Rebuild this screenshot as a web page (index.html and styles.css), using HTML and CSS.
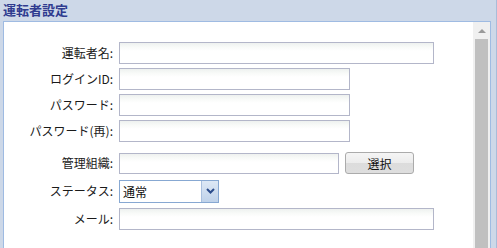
FILE: index.html
```html
<!DOCTYPE html>
<html lang="ja">
<head>
<meta charset="utf-8">
<title>運転者設定</title>
<link rel="stylesheet" href="styles.css">
</head>
<body>
<div class="window">
  <div class="title">運転者設定</div>
  <div class="panel">
    <form class="form">
      <div class="row r1">
        <label class="lbl">運転者名:</label>
        <input class="inp w-long" type="text">
      </div>
      <div class="row">
        <label class="lbl">ログインID:</label>
        <input class="inp w-mid" type="text">
      </div>
      <div class="row">
        <label class="lbl">パスワード:</label>
        <input class="inp w-mid" type="password">
      </div>
      <div class="row">
        <label class="lbl">パスワード(再):</label>
        <input class="inp w-mid" type="password">
      </div>
      <div class="row r5">
        <label class="lbl">管理組織:</label>
        <input class="inp w-org" type="text">
        <button class="btn" type="button">選択</button>
      </div>
      <div class="row r6">
        <label class="lbl">ステータス:</label>
        <div class="select">
          <span class="sel-text">通常</span>
          <span class="sel-btn">
            <svg width="9" height="6" viewBox="0 0 9 6"><path d="M1 1 L4.5 4.5 L8 1" fill="none" stroke="#2b4c8c" stroke-width="2"/></svg>
          </span>
        </div>
      </div>
      <div class="row r7">
        <label class="lbl">メール:</label>
        <input class="inp w-long" type="text">
      </div>
    </form>
    <div class="scrollbar">
      <div class="arrow"></div>
      <div class="thumb"></div>
    </div>
  </div>
</div>
</body>
</html>
```
FILE: styles.css
```css
html, body {
  margin: 0;
  padding: 0;
  height: 100%;
  overflow: hidden;
}
body {
  background: #cdd8e8;
  font-family: "Noto Sans CJK JP", "Liberation Sans", sans-serif;
  font-size: 12px;
  color: #111;
}
.window {
  height: 248px;
  border-right: 1px solid #a9bcd8;
  box-sizing: border-box;
  width: 497px;
  display: flex;
  flex-direction: column;
}
.title {
  height: 21px;
  padding-left: 3px;
  font-size: 13px;
  font-weight: bold;
  color: #2f3b8f;
  line-height: 19px;
}
.panel {
  flex: 1;
  margin-left: 3px;
  width: 488px;
  box-sizing: border-box;
  border: 1px solid #9fbbe2;
  border-bottom: none;
  background: #fff;
  display: flex;
}
.form {
  flex: 1;
  margin: 0;
  padding-top: 20px;
  display: flex;
  flex-direction: column;
  gap: 4px;
}
.row {
  display: flex;
  align-items: center;
  height: 22px;
}
.r5 { margin-top: 6px; }
.r6 { margin-top: 2px; }
.r7 { margin-top: 2px; }
.lbl {
  width: 115px;
  text-align: right;
  padding-right: 6px;
  box-sizing: border-box;
  flex: none;
  line-height: 22px;
  white-space: nowrap;
  color: #1a1a1a;
}
.inp {
  box-sizing: border-box;
  height: 22px;
  margin: 0;
  padding: 0 3px;
  border: 1px solid #b3b6c9;
  background: linear-gradient(#eef1ef 0px, #f8faf8 4px, #fff 8px);
  font: inherit;
  outline: none;
}
.w-long { width: 315px; }
.w-mid { width: 231px; }
.w-org { width: 220px; height: 21px; }
.btn {
  margin-left: 6px;
  width: 69px;
  height: 22px;
  box-sizing: border-box;
  border: 1px solid #ababab;
  border-radius: 3px;
  background: linear-gradient(#f5f5f5 0, #ececec 50%, #dcdcdc 50%, #dedede 100%);
  font: inherit;
  color: #111;
  padding: 0;
}
.select {
  width: 100px;
  height: 23px;
  box-sizing: border-box;
  border: 1px solid #87a8d2;
  display: flex;
  align-items: center;
  background: #fff;
}
.sel-text {
  flex: 1;
  padding-left: 3px;
}
.sel-btn {
  width: 16px;
  height: 100%;
  border-left: 1px solid #a9c0df;
  background: linear-gradient(#dde8f5, #bfd2ea);
  display: flex;
  align-items: center;
  justify-content: center;
}
.scrollbar {
  width: 17px;
  background: #f0f0f0;
  display: flex;
  flex-direction: column;
  align-items: center;
}
.arrow {
  margin-top: 7px;
  width: 0;
  height: 0;
  border-left: 4px solid transparent;
  border-right: 4px solid transparent;
  border-bottom: 4px solid #9a9a9a;
}
.thumb {
  margin-top: 6px;
  width: 13px;
  flex: 1;
  background: #c0c0c0;
}
```
